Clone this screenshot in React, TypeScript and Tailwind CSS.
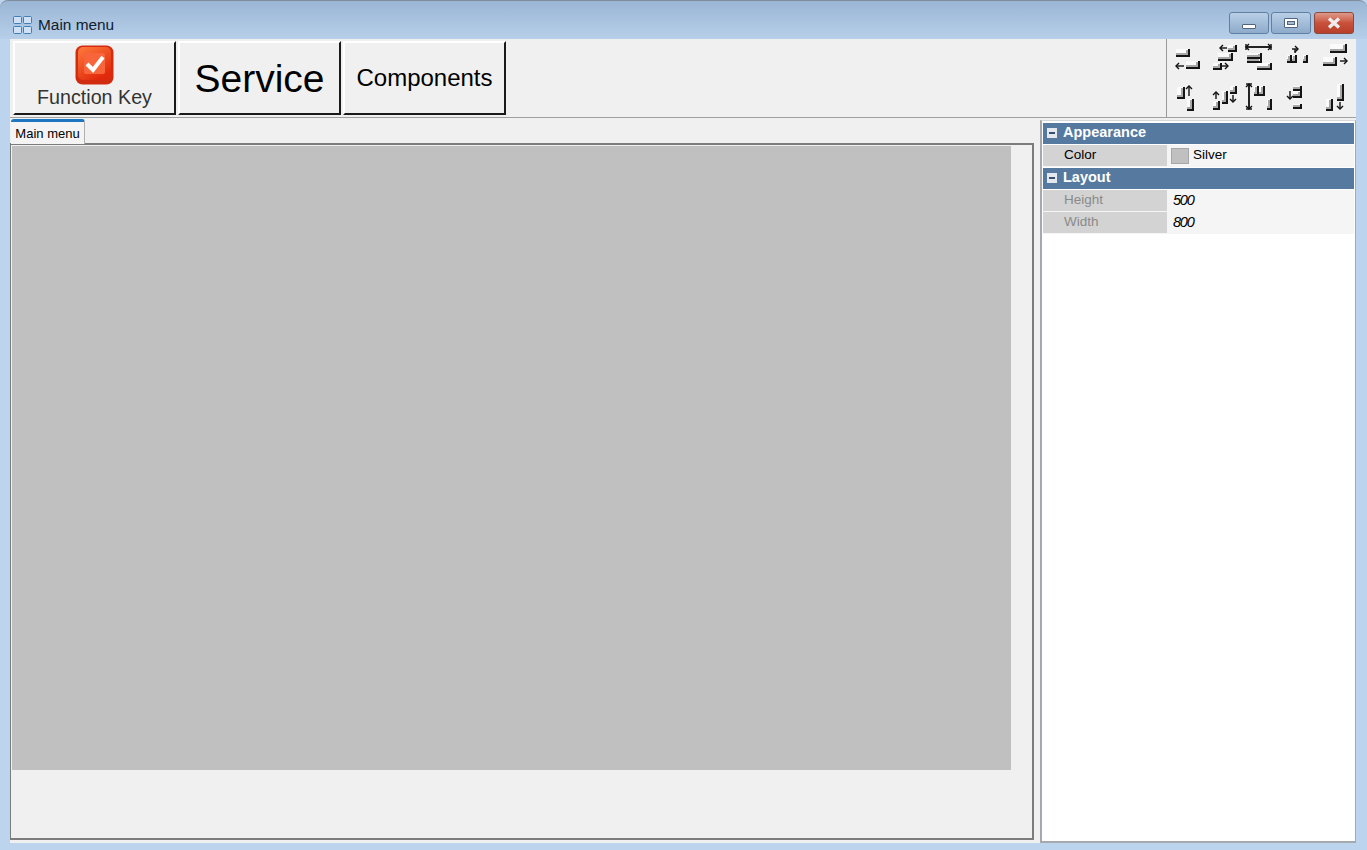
import type { ReactNode } from 'react';

const font = { fontFamily: '"Liberation Sans", Arial, sans-serif' };

// [x, y, w, h] of the raised bars in each align icon
type Rect = [number, number, number, number];
// [x1, y1, x2, y2] of the arrows
type Line = [number, number, number, number];

const alignIcons: { bars: Rect[]; arrows: Line[]; ticks?: Line[] }[] = [
    { bars: [[4, 7, 14, 8], [14, 19, 14, 8]], arrows: [[12, 24, 4, 24]] },
    { bars: [[20, 3, 9, 7], [10, 11, 15, 8], [5, 21, 9, 7]], arrows: [[19, 6, 12, 6], [14, 24, 20, 24]] },
    {
        bars: [[3, 11, 15, 6], [3, 17, 15, 4], [13, 21, 15, 7]],
        arrows: [[2, 5, 27, 5], [27, 5, 2, 5]],
        ticks: [[2, 2, 2, 8], [27, 2, 27, 8]],
    },
    { bars: [[7, 13, 5, 8], [12, 13, 5, 8], [23, 13, 5, 8]], arrows: [[12, 7, 18, 7]], ticks: [[15, 7, 15, 11]] },
    { bars: [[14, 2, 17, 9], [7, 15, 14, 9]], arrows: [[24, 19, 31, 19]] },
    { bars: [[5, 7, 8, 12], [15, 19, 7, 12]], arrows: [[17, 16, 17, 6]] },
    { bars: [[5, 21, 7, 9], [14, 11, 6, 13], [22, 6, 7, 8]], arrows: [[8, 19, 8, 12], [25, 15, 25, 22]] },
    {
        bars: [[10, 6, 5, 10], [15, 6, 6, 10], [23, 19, 5, 11]],
        arrows: [[5, 4, 5, 29], [5, 29, 5, 4]],
        ticks: [[2, 4, 8, 4], [2, 29, 8, 29]],
    },
    { bars: [[13, 6, 9, 5], [13, 11, 9, 7], [13, 24, 9, 5]], arrows: [[10, 11, 10, 19]] },
    { bars: [[21, 4, 7, 17], [10, 19, 7, 12]], arrows: [[24, 22, 24, 29]] },
];

function AlignIcon({ bars, arrows, ticks = [] }: (typeof alignIcons)[number]) {
    return (
        <svg width="36" height="34" viewBox="0 0 36 34" fill="none">
            {bars.map(([x, y, w, h], i) => (
                <g key={i}>
                    <rect x={x} y={y} width={w} height={h} fill="#fbfbfb" />
                    {/* grey shade inside the dark edge */}
                    <path d={`M${x + w - 3} ${y + 1}V${y + h - 3}H${x}`} stroke="#a8a8a8" strokeWidth="2" />
                    <path d={`M${x + w - 1} ${y}V${y + h - 1}H${x}`} stroke="#141414" strokeWidth="2" />
                </g>
            ))}
            {ticks.map(([x1, y1, x2, y2], i) => (
                <line key={i} x1={x1} y1={y1} x2={x2} y2={y2} stroke="#111" strokeWidth="1.4" />
            ))}
            {arrows.map(([x1, y1, x2, y2], i) => {
                const dx = Math.sign(x2 - x1);
                const dy = Math.sign(y2 - y1);
                return (
                    <g key={i} stroke="#111" strokeWidth="1.4">
                        <line x1={x1} y1={y1} x2={x2} y2={y2} />
                        <path d={`M${x2 - dx * 3 - dy * 3} ${y2 - dy * 3 - dx * 3}L${x2} ${y2}L${x2 - dx * 3 + dy * 3} ${y2 - dy * 3 + dx * 3}`} />
                    </g>
                );
            })}
        </svg>
    );
}

function ToolButton({ className, children }: { className: string; children: ReactNode }) {
    return (
        <button className={`flex h-[74px] flex-col items-center justify-center border-t-2 border-r-2 border-b-2 border-l-2 border-t-white border-r-[#1a1a1a] border-b-[#1a1a1a] border-l-white bg-[#f0f0f0] text-black ${className}`}>
            {children}
        </button>
    );
}

function CheckIcon() {
    return (
        <svg width="39" height="40" viewBox="0 0 39 40">
            <defs>
                <linearGradient id="chk" x1="0" y1="0" x2="0.6" y2="1">
                    <stop offset="0" stopColor="#ff7a3c" />
                    <stop offset="1" stopColor="#e0290c" />
                </linearGradient>
            </defs>
            <rect x="0.5" y="0.5" width="38" height="39" rx="7" fill="#d22c10" />
            <rect x="3" y="2" width="33" height="33" rx="5" fill="url(#chk)" />
            <rect x="9" y="8" width="21" height="21" rx="2" fill="#f8653a" />
            <path d="M12 19l6 6 10-13" fill="none" stroke="#fff" strokeWidth="4" />
        </svg>
    );
}

function WindowButton({ className, children }: { className: string; children: ReactNode }) {
    return (
        <div className={`flex h-[22px] w-[40px] items-center justify-center rounded-[3px] border border-[#5f7fa3] ${className}`}>
            {children}
        </div>
    );
}

function GroupHeader({ label }: { label: string }) {
    return (
        <div className="flex h-[21px] items-center gap-[6px] bg-[#55799f] pb-px pl-[4px] text-[14.5px] font-bold text-white">
            <span className="flex h-[10px] w-[10px] items-center justify-center bg-[#e4e8ee]">
                <span className="h-[2px] w-[6px] bg-[#34506e]" />
            </span>
            {label}
        </div>
    );
}

function PropertyRow({ label, muted, children }: { label: string; muted?: boolean; children: ReactNode }) {
    return (
        <div className="flex h-[22px] border-b border-[#f5f5f5]">
            <div className={`flex w-[124px] items-center bg-[#d3d3d3] pl-[21px] text-[13.5px] ${muted ? 'text-[#8a8a8a]' : 'text-black'}`}>
                {label}
            </div>
            <div className="flex flex-1 items-center bg-[#f5f5f5] pl-[4px] text-[13.5px] text-black">{children}</div>
        </div>
    );
}

export default function App() {
    return (
        <div className="flex h-[850px] w-[1367px] flex-col overflow-hidden bg-[#bcd4ee]" style={font}>
            {/* Title bar */}
            <div className="flex h-[39px] shrink-0 items-start justify-between rounded-t-[8px] border-t border-[#7f8c9c] bg-gradient-to-b from-[#9ab6d5] to-[#b7cfe9] pr-[13px] pl-[13px]">
                <div className="mt-[12px] flex items-center gap-[6px] text-[15.4px] text-[#10202f]">
                    <svg width="19" height="18" viewBox="0 0 19 18" fill="#cfe2f5" stroke="#3f7fb5">
                        <rect x="0.5" y="0.5" width="8" height="7" rx="1" />
                        <rect x="10.5" y="0.5" width="8" height="7" rx="1" />
                        <rect x="0.5" y="10.5" width="8" height="7" rx="1" />
                        <rect x="10.5" y="10.5" width="8" height="7" rx="1" />
                    </svg>
                    Main menu
                </div>
                <div className="mt-[11px] flex gap-[2px]">
                    <WindowButton className="bg-gradient-to-b from-[#b9cfe6] to-[#8eabcb]">
                        <span className="mt-[6px] h-[5px] w-[14px] rounded-[1px] border border-[#50657c] bg-white" />
                    </WindowButton>
                    <WindowButton className="bg-gradient-to-b from-[#b9cfe6] to-[#8eabcb]">
                        <span className="flex h-[10px] w-[14px] items-center justify-center rounded-[1px] border border-[#50657c] bg-white">
                            <span className="h-[4px] w-[8px] border border-[#50657c] bg-[#a8bdd3]" />
                        </span>
                    </WindowButton>
                    <WindowButton className="ml-[1px] border-[#8a4a3e] bg-gradient-to-b from-[#dd9a8a] via-[#c9503a] to-[#b8402c]">
                        <svg width="16" height="12" viewBox="0 0 16 12">
                            <path d="M3 1.5l10 9M13 1.5l-10 9" stroke="#eee" strokeWidth="3.4" />
                        </svg>
                    </WindowButton>
                </div>
            </div>

            <div className="mr-[11px] ml-[10px] flex min-h-0 flex-1 flex-col bg-[#f0f0f0]">
                {/* Toolbar */}
                <div className="flex h-[79px] shrink-0 items-start justify-between border-b border-[#a0a0a0] pt-[2px] pl-[3px]">
                    <div className="flex gap-[2px]">
                        <ToolButton className="w-[163px]">
                            <span className="-mt-[3px]">
                                <CheckIcon />
                            </span>
                            <span className="text-[19.7px] leading-[24px] text-[#333]">Function Key</span>
                        </ToolButton>
                        <ToolButton className="w-[163px]">
                            <span className="text-[39px] leading-none">Service</span>
                        </ToolButton>
                        <ToolButton className="w-[163px]">
                            <span className="text-[24px] leading-none">Components</span>
                        </ToolButton>
                    </div>
                    <div className="-mt-[2px] flex h-[78px] w-[190px] border-l border-[#9a9a9a] bg-[#f0f0f0] pt-[3px] pl-[5px]">
                        <div className="grid grid-cols-5">
                            {alignIcons.map((icon, i) => (
                                <AlignIcon key={i} {...icon} />
                            ))}
                        </div>
                    </div>
                </div>

                <div className="flex min-h-0 flex-1 gap-[6px]">
                    {/* Designer tab */}
                    <div className="flex w-[1024px] flex-col pb-[3px]">
                        <div className="flex h-[25px] shrink-0 items-end pl-[1px]">
                            <div className="relative z-10 -mb-[1px] flex h-[25px] w-[74px] items-center justify-center rounded-t-[3px] border-t-[3px] border-r border-t-[#1d76c2] border-r-[#b0b0b0] bg-[#f4f4f4] pt-[1px] text-[13px] text-black">
                                Main menu
                            </div>
                        </div>
                        <div className="min-h-0 flex-1 border-t-2 border-r-2 border-b-2 border-l border-[#7c7c7c] bg-[#f0f0f0] pt-[1px] pl-[1px]">
                            <div className="h-[624px] w-[999px] bg-[#c0c0c0]" />
                        </div>
                    </div>

                    {/* Property grid */}
                    <div className="mt-[2px] flex-1 border-t border-r border-b-2 border-l-2 border-[#a5a9ad] border-t-[#d8d8d8] bg-white pt-[2px] pr-[1px] pl-[1px]">
                        <GroupHeader label="Appearance" />
                        <div className="h-px" />
                        <PropertyRow label="Color">
                            <span className="mr-[4px] h-[16px] w-[18px] border border-[#a8a8a8] bg-[#c0c0c0]" />
                            Silver
                        </PropertyRow>
                        <div className="h-px" />
                        <GroupHeader label="Layout" />
                        <div className="h-px" />
                        <PropertyRow label="Height" muted>
                            <span className="pl-[2px] text-[14.5px] italic tracking-[-1.2px]">500</span>
                        </PropertyRow>
                        <PropertyRow label="Width" muted>
                            <span className="pl-[2px] text-[14.5px] italic tracking-[-1.2px]">800</span>
                        </PropertyRow>
                    </div>
                </div>
            </div>
            <div className="h-[7px] shrink-0" />
        </div>
    );
}
